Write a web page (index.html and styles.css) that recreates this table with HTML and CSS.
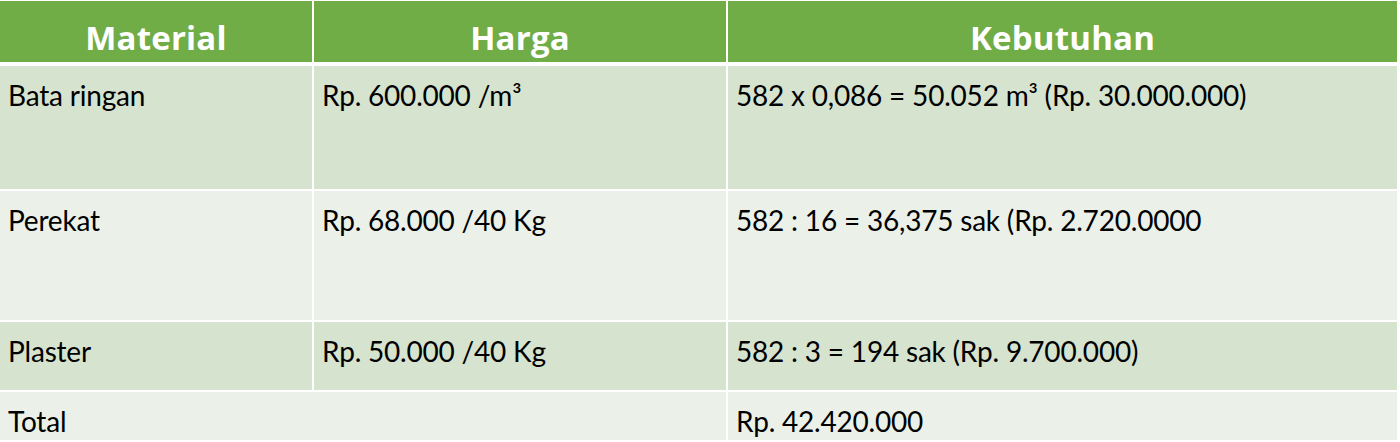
FILE: index.html
```html
<!DOCTYPE html>
<html>
<head>
<meta charset="utf-8">
<link rel="stylesheet" href="styles.css">
</head>
<body>
<div class="table">
  <div class="cell head">Material</div>
  <div class="cell head">Harga</div>
  <div class="cell head">Kebutuhan</div>

  <div class="cell odd">Bata ringan</div>
  <div class="cell odd">Rp. 600.000 /m³</div>
  <div class="cell odd">582 x 0,086 = 50.052 m³ (Rp. 30.000.000)</div>

  <div class="cell even">Perekat</div>
  <div class="cell even">Rp. 68.000 /40 Kg</div>
  <div class="cell even">582 : 16 = 36,375 sak (Rp. 2.720.0000</div>

  <div class="cell odd">Plaster</div>
  <div class="cell odd">Rp. 50.000 /40 Kg</div>
  <div class="cell odd">582 : 3 = 194 sak (Rp. 9.700.000)</div>

  <div class="cell even span2">Total</div>
  <div class="cell even">Rp. 42.420.000</div>
</div>
</body>
</html>
```

FILE: styles.css
```css
html, body {
  margin: 0;
  padding: 0;
  background: #ffffff;
}

body {
  padding-top: 1px;
  font-family: "Lato", "Open Sans", sans-serif;
}

.table {
  display: grid;
  width: 1397px;
  grid-template-columns: 312px 412px 669px;
  grid-template-rows: 63px 123px 129px 68px 48px;
  gap: 2px;
  background: #ffffff;
}

.cell {
  font-size: 28px;
  line-height: 1.2;
  color: #000000;
  padding: 13px 0 0 8px;
  letter-spacing: -0.2px;
  white-space: nowrap;
}

.head {
  background: #70ad47;
  color: #ffffff;
  font-family: "Open Sans", "Lato", sans-serif;
  font-weight: 700;
  font-size: 33px;
  text-align: center;
  padding: 17px 0 0 0;
  margin-bottom: 2px;
  letter-spacing: 0.2px;
}

.odd {
  background: #d5e3cf;
}

.even {
  background: #ebf1e9;
}

.span2 {
  grid-column: span 2;
}
```
